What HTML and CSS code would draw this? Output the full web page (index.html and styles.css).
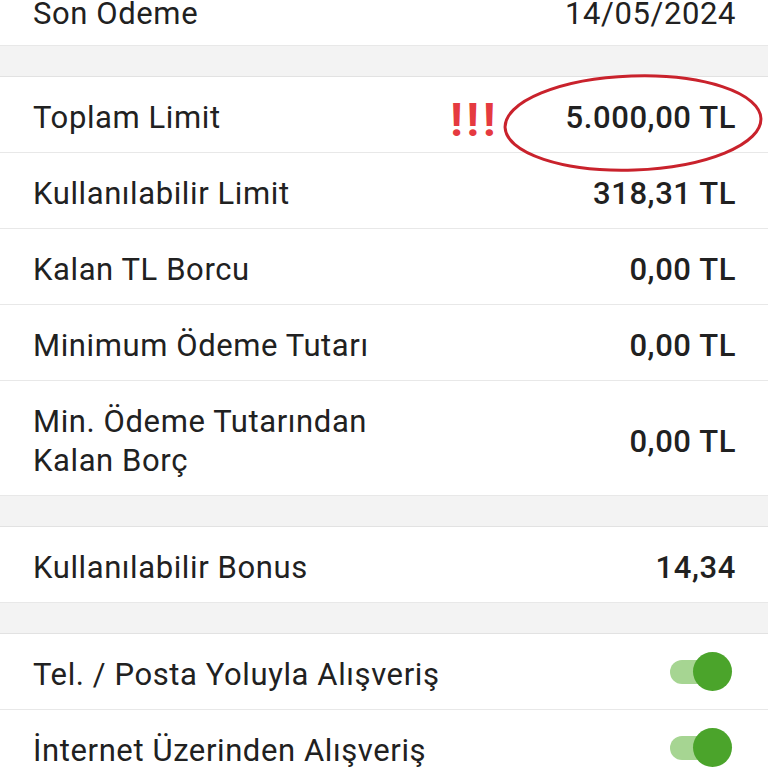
FILE: index.html
```html
<!DOCTYPE html>
<html>
<head>
    <title>Kart Detayları</title>
    <link rel="stylesheet" href="styles.css">
</head>
<body>
    <div class="card-details">
        <div class="row first">
            <span class="label">Son Odeme</span>
            <span class="value plain">14/05/2024</span>
        </div>

        <div class="spacer"></div>

        <div class="row highlight">
            <span class="label">Toplam Limit</span>
            <div class="value-group">
                <span class="alert">!!!</span>
                <span class="value">5.000,00 TL</span>
            </div>
            <!-- hand drawn circle over the amount -->
            <svg class="circle-mark" width="270" height="104" viewBox="0 0 270 104">
                <ellipse cx="133" cy="51" rx="128" ry="47" transform="rotate(-2 133 51)" fill="none" stroke="#c9222c" stroke-width="3"/>
            </svg>
        </div>
        <div class="row">
            <span class="label">Kullanılabilir Limit</span>
            <span class="value">318,31 TL</span>
        </div>
        <div class="row">
            <span class="label">Kalan TL Borcu</span>
            <span class="value">0,00 TL</span>
        </div>
        <div class="row">
            <span class="label">Minimum Ödeme Tutarı</span>
            <span class="value">0,00 TL</span>
        </div>
        <div class="row">
            <span class="label">Min. Ödeme Tutarından<br>Kalan Borç</span>
            <span class="value">0,00 TL</span>
        </div>

        <div class="spacer"></div>

        <div class="row">
            <span class="label">Kullanılabilir Bonus</span>
            <span class="value">14,34</span>
        </div>

        <div class="spacer"></div>

        <div class="row">
            <span class="label">Tel. / Posta Yoluyla Alışveriş</span>
            <span class="toggle on"><span class="knob"></span></span>
        </div>
        <div class="row">
            <span class="label">İnternet Üzerinden Alışveriş</span>
            <span class="toggle on"><span class="knob"></span></span>
        </div>
    </div>
</body>
</html>
```

FILE: styles.css
```css
body {
    margin: 0;
    background: #ffffff;
    font-family: Roboto, "Noto Sans", sans-serif;
    color: #212121;
    overflow: hidden;
}
.card-details {
    margin-top: -30px;
}
.row {
    display: flex;
    justify-content: space-between;
    align-items: center;
    padding: 21px 32px 15px 33px;
    border-bottom: 1px solid #e8e8e8;
    font-size: 31px;
    line-height: 39px;
    letter-spacing: 0.6px;
}
.row.first {
    padding-top: 24px;
    padding-bottom: 12px;
}
.row.highlight {
    position: relative;
}
.spacer {
    height: 30px;
    background: #f3f3f3;
    border-bottom: 1px solid #e2e2e2;
}
.value {
    font-weight: 500;
    white-space: nowrap;
}
.value.plain {
    font-weight: 400;
}
.value-group {
    display: flex;
    align-items: center;
    gap: 66px;
    height: 39px;
}
.alert {
    color: #e53a40;
    font-weight: 700;
    font-size: 46px;
    letter-spacing: 4px;
    line-height: 39px;
    transform: translateY(3px);
}
.circle-mark {
    position: absolute;
    left: 500px;
    top: -5px;
}
.toggle {
    position: relative;
    width: 62px;
    height: 39px;
    margin-right: 4px;
    margin-top: -6px;
}
.toggle::before {
    content: "";
    position: absolute;
    left: 0;
    top: 8px;
    width: 48px;
    height: 24px;
    border-radius: 12px;
    background: #a6d592;
}
.toggle .knob {
    position: absolute;
    right: 0;
    top: 0;
    width: 39px;
    height: 39px;
    border-radius: 50%;
    background: #4ba42b;
}
```
